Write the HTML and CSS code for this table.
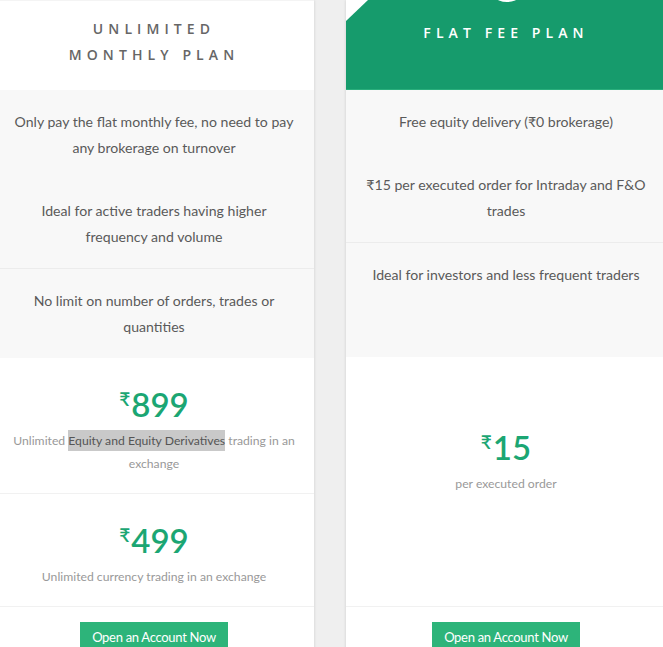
FILE: index.html
```html
<!DOCTYPE html>
<html lang="en">

<head>
    <meta charset="UTF-8">
    <meta name="viewport" content="width=device-width, initial-scale=1.0">
    <title>Pricing plans</title>
    <link rel="stylesheet" href="styles.css">
</head>

<body>
    <section class="plans">
        <div class="plan">
            <div class="plan-header">
                <h2>Unlimited<br>Monthly Plan</h2>
            </div>
            <div class="features">
                <div class="feature">Only pay the flat monthly fee, no need to pay any brokerage on turnover</div>
                <div class="feature">Ideal for active traders having higher frequency and volume</div>
                <div class="feature">No limit on number of orders, trades or quantities</div>
            </div>
            <div class="prices">
                <div class="price-box">
                    <div class="price"><span class="rupee">₹</span>899</div>
                    <p>Unlimited <span class="mark">Equity and Equity Derivatives</span> trading in an exchange</p>
                </div>
                <div class="price-box">
                    <div class="price"><span class="rupee">₹</span>499</div>
                    <p>Unlimited currency trading in an exchange</p>
                </div>
            </div>
            <div class="cta">
                <button>Open an Account Now</button>
            </div>
        </div>

        <div class="plan">
            <div class="plan-header green">
                <span class="badge"></span>
                <h2>Flat Fee Plan</h2>
            </div>
            <div class="features">
                <div class="feature">Free equity delivery (₹0 brokerage)</div>
                <div class="feature">₹15 per executed order for Intraday and F&amp;O trades</div>
                <div class="feature">Ideal for investors and less frequent traders</div>
            </div>
            <div class="prices">
                <div class="price-box single">
                    <div class="price"><span class="rupee">₹</span>15</div>
                    <p>per executed order</p>
                </div>
            </div>
            <div class="cta">
                <button>Open an Account Now</button>
            </div>
        </div>
    </section>
</body>

</html>
```

FILE: styles.css
```css
body {
    margin: 0;
    background-color: #efefef;
    font-family: Lato, "Open Sans", sans-serif;
    overflow: hidden;
}

.plans {
    display: grid;
    grid-template-columns: 320px 320px;
    gap: 32px;
    margin-left: -6px;
}

.plan {
    display: flex;
    flex-direction: column;
    background-color: #ffffff;
    box-shadow: 0 0 3px rgba(0, 0, 0, 0.14);
}

.plan-header {
    position: relative;
    height: 90px;
    box-sizing: border-box;
    padding-top: 15px;
    text-align: center;
    border-top: 1px solid #f4f4f4;
    overflow: hidden;
}

.plan-header h2 {
    margin: 0;
    font-family: "Open Sans", sans-serif;
    font-size: 14px;
    font-weight: 600;
    line-height: 26px;
    letter-spacing: 5.1px;
    text-transform: uppercase;
    color: #666;
}

.plan-header.green {
    padding-top: 20px;
    border-top: none;
    border-bottom: 1px solid #2aae7c;
    background-color: #169b6c;
}

.plan-header.green h2 {
    color: #ffffff;
}

.plan-header.green::before {
    content: "";
    position: absolute;
    top: 0;
    left: 0;
    border-top: 21px solid #ffffff;
    border-right: 22px solid transparent;
}

.badge {
    position: absolute;
    top: -40px;
    left: 140px;
    width: 42px;
    height: 42px;
    border-radius: 50%;
    background-color: #ffffff;
}

.features {
    min-height: 267px;
    background-color: #f8f8f8;
}

.feature {
    padding: 19px 18px 18px;
    font-size: 14.1px;
    line-height: 26px;
    color: #5a5a5a;
    text-align: center;
}

.feature:last-child {
    border-top: 1px solid #ececec;
}

.prices {
    flex: 1;
    display: flex;
    flex-direction: column;
}

.price-box {
    padding: 21px 10px 18px;
    text-align: center;
    border-bottom: 1px solid #f1f1f1;
}

.price-box.single {
    flex: 1;
    padding-top: 65px;
}

.price {
    font-size: 33px;
    line-height: 50px;
    font-weight: 600;
    color: #1ba673;
}

.rupee {
    font-size: 19px;
    line-height: 0;
    vertical-align: 11px;
    margin-right: 1px;
}

.price-box p {
    margin: 0;
    font-size: 12.2px;
    line-height: 23px;
    color: #999;
}

.mark {
    background-color: #c9c9c9;
    color: #555;
    padding: 3px 0;
}

.cta {
    padding-top: 15px;
    text-align: center;
}

.cta button {
    border: none;
    background-color: #2db47a;
    color: #ffffff;
    font-family: Lato, sans-serif;
    font-size: 13px;
    line-height: 18px;
    padding: 6px 10px 10px;
    width: 148px;
    letter-spacing: -0.3px;
}
```
